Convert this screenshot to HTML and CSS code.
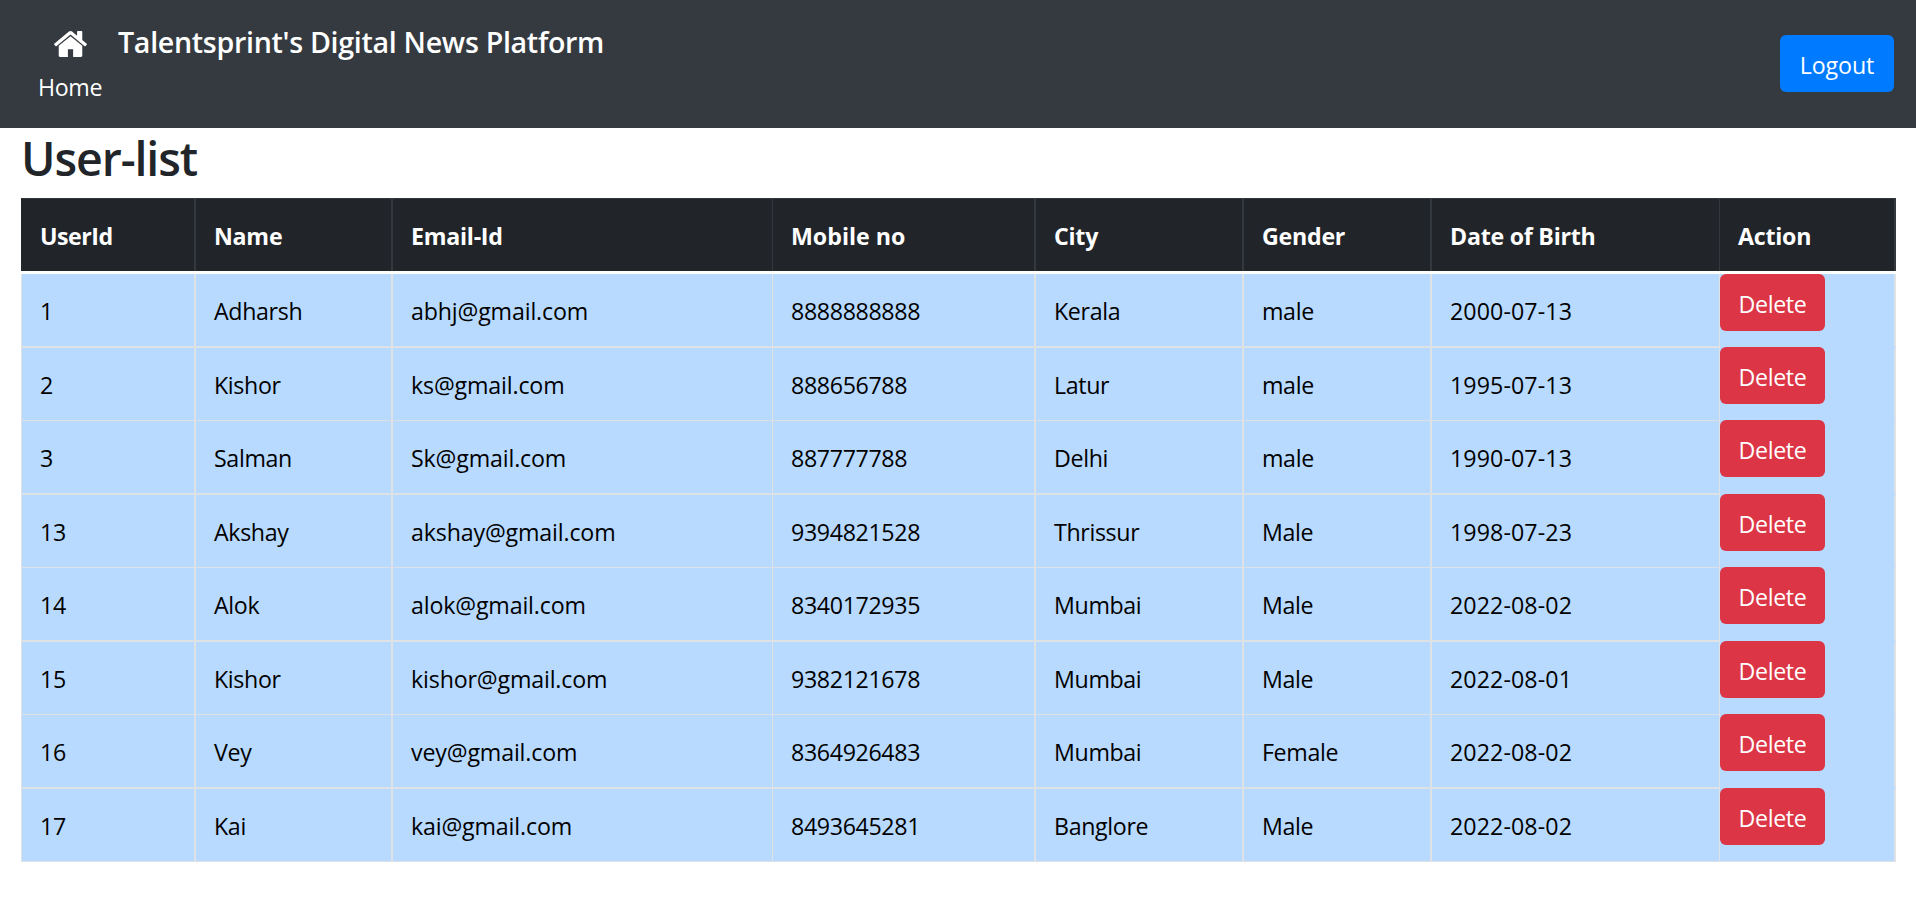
FILE: index.html
```html
<!DOCTYPE html>
<html lang="en">
<head>
<meta charset="utf-8">
<title>User-list</title>
<link rel="stylesheet" href="styles.css">
</head>
<body>
<header class="navbar">
  <a class="home" href="#">
    <svg class="home-icon" viewBox="25 253 1614 1283" preserveAspectRatio="none" aria-hidden="true"><path fill="currentColor" d="M1408 992v480q0 26-19 45t-45 19h-384v-384h-256v384h-384q-26 0-45-19t-19-45v-480q0-1 .5-3t.5-3l575-474 575 474q1 2 1 6zm223-69l-62 74q-8 9-21 11h-3q-13 0-21-7l-692-577-692 577q-12 8-24 7-13-2-21-11l-62-74q-8-10-7-23.5t11-21.5l719-599q32-26 76-26t76 26l244 204v-195q0-14 9-23t23-9h192q14 0 23 9t9 23v408l219 182q10 8 11 21.5t-7 23.5z"/></svg>
    <span class="home-label">Home</span>
  </a>
  <h2 class="brand">Talentsprint's Digital News Platform</h2>
  <button class="btn btn-primary" type="button">Logout</button>
</header>
<main class="content">
  <h1 class="title">User-list</h1>
  <div class="table" role="table">
    <div class="row head" role="row"><div>UserId</div><div>Name</div><div>Email-Id</div><div>Mobile no</div><div>City</div><div>Gender</div><div>Date of Birth</div><div>Action</div></div>
    <div class="row" role="row"><div>1</div><div>Adharsh</div><div class="email">abhj@gmail.com</div><div>8888888888</div><div>Kerala</div><div>male</div><div class="date">2000-07-13</div><div class="action"><button class="btn btn-danger" type="button">Delete</button></div></div>
    <div class="row" role="row"><div>2</div><div>Kishor</div><div class="email">ks@gmail.com</div><div>888656788</div><div>Latur</div><div>male</div><div class="date">1995-07-13</div><div class="action"><button class="btn btn-danger" type="button">Delete</button></div></div>
    <div class="row" role="row"><div>3</div><div>Salman</div><div class="email">Sk@gmail.com</div><div>887777788</div><div>Delhi</div><div>male</div><div class="date">1990-07-13</div><div class="action"><button class="btn btn-danger" type="button">Delete</button></div></div>
    <div class="row" role="row"><div>13</div><div>Akshay</div><div class="email">akshay@gmail.com</div><div>9394821528</div><div>Thrissur</div><div>Male</div><div class="date">1998-07-23</div><div class="action"><button class="btn btn-danger" type="button">Delete</button></div></div>
    <div class="row" role="row"><div>14</div><div>Alok</div><div class="email">alok@gmail.com</div><div>8340172935</div><div>Mumbai</div><div>Male</div><div class="date">2022-08-02</div><div class="action"><button class="btn btn-danger" type="button">Delete</button></div></div>
    <div class="row" role="row"><div>15</div><div>Kishor</div><div class="email">kishor@gmail.com</div><div>9382121678</div><div>Mumbai</div><div>Male</div><div class="date">2022-08-01</div><div class="action"><button class="btn btn-danger" type="button">Delete</button></div></div>
    <div class="row" role="row"><div>16</div><div>Vey</div><div class="email">vey@gmail.com</div><div>8364926483</div><div>Mumbai</div><div>Female</div><div class="date">2022-08-02</div><div class="action"><button class="btn btn-danger" type="button">Delete</button></div></div>
    <div class="row" role="row"><div>17</div><div>Kai</div><div class="email">kai@gmail.com</div><div>8493645281</div><div>Banglore</div><div>Male</div><div class="date">2022-08-02</div><div class="action"><button class="btn btn-danger" type="button">Delete</button></div></div>
  </div>
</main>
</body>
</html>
```

FILE: styles.css
```css
* { box-sizing: border-box; }

body {
  margin: 0;
  background: #fff;
  color: #212529;
  font-family: "Open Sans", "Noto Sans", sans-serif;
  font-size: 23.2px;
  line-height: 36px;
  letter-spacing: -0.35px;
}

.navbar {
  display: flex;
  align-items: flex-start;
  height: 128px;
  padding: 0 22px 0 38px;
  background: #343a40;
  color: #fff;
}

.home {
  display: flex;
  flex-direction: column;
  align-items: center;
  width: 64px;
  padding-top: 31px;
  color: #fff;
  text-decoration: none;
}

.home-icon { width: 33px; height: 26px; }
.home-label { margin-top: 12px; }

.brand {
  margin: 24px auto 0 16px;
  font-size: 28.6px;
  font-weight: 600;
  line-height: 36px;
  letter-spacing: -0.3px;
}

.btn {
  height: 57px;
  padding: 3px 0 0;
  border: 0;
  border-radius: 6px;
  color: #fff;
  font: inherit;
  letter-spacing: inherit;
  text-align: center;
}

.btn-primary { width: 114px; margin-top: 35px; background: #007bff; letter-spacing: -0.1px; }
.btn-danger { display: block; width: 105px; background: #dc3545; }

.content { padding: 0 20px 0 21px; }

.title {
  margin: 0;
  height: 70px;
  font-size: 46.5px;
  font-weight: 600;
  line-height: 60px;
  letter-spacing: -1.1px;
}

.table {
  border-left: 1px solid #dee2e6;
}

.row {
  display: grid;
  grid-template-columns: 174px 197px 380px 263px 208px 188px 288px 176px;
  height: 73px;
  background: #b8daff;
  color: #000;
}

.row > div {
  padding: 19px 0 0 18px;
  border: solid #dee2e6;
  border-width: 0 2px 1px 0;
}

.row > div:nth-child(3),
.row > div:nth-child(7) { border-right-width: 1px; }

.row:nth-child(even) { height: 74px; }
.row:nth-child(even) > div { border-bottom-width: 2px; }

.row > .email { letter-spacing: -0.15px; }
.row > .date { letter-spacing: 0.1px; }

.row > .action { padding: 0; border-bottom-color: #b8daff; }
.row:last-child > .action { border-bottom-color: #dee2e6; }
.row:nth-child(n + 3) .btn-danger { margin-top: -1px; }

.head {
  height: 76px;
  margin-left: -1px;
  padding-left: 1px;
  border-bottom: 3px solid #fff;
  background: #212529;
  color: #fff;
  font-weight: 700;
  letter-spacing: -0.25px;
}

.row.head > div {
  border-color: #32383e;
  border-top-width: 1px;
  border-bottom-width: 0;
}

.head > div:first-child { letter-spacing: -0.5px; }
.head > div:nth-child(4) { letter-spacing: 0; }
```
